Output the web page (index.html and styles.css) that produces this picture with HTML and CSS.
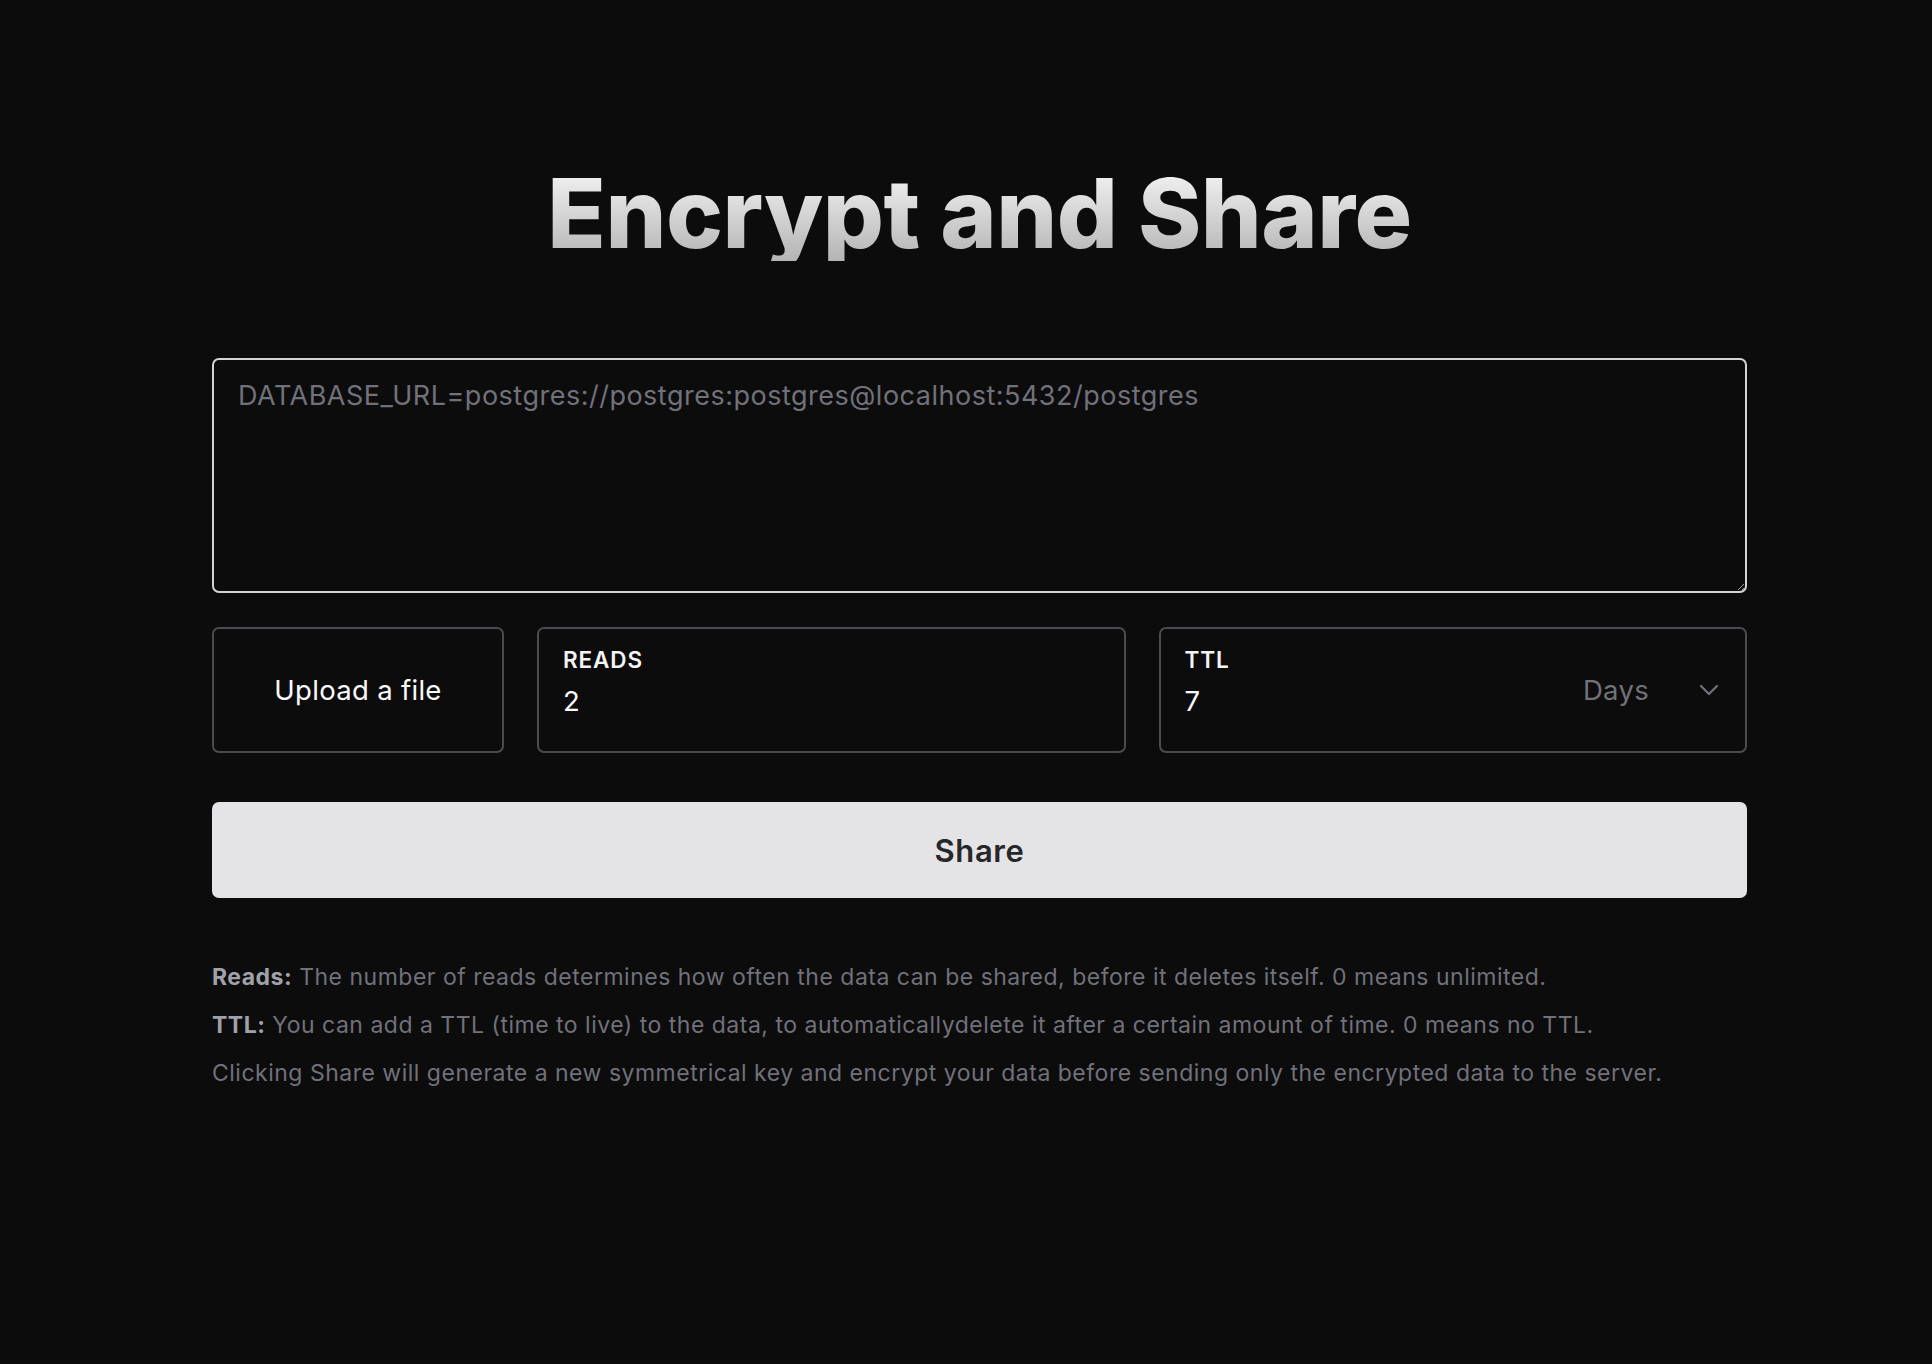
FILE: index.html
```html
<!DOCTYPE html>
<html lang="en">
<head>
<meta charset="utf-8">
<title>Encrypt and Share</title>
<link rel="stylesheet" href="styles.css">
</head>
<body>
<main class="page">
  <div class="container">
    <h1 class="title">Encrypt and Share</h1>
    <form class="form">
      <textarea class="secret" placeholder="DATABASE_URL=postgres://postgres:postgres@localhost:5432/postgres"></textarea>
      <div class="options">
        <div class="box upload">Upload a file</div>
        <div class="box field">
          <span class="label">READS</span>
          <span class="value">2</span>
        </div>
        <div class="box field ttl">
          <div class="ttl-left">
            <span class="label">TTL</span>
            <span class="value">7</span>
          </div>
          <div class="unit">
            <span>Days</span>
            <svg class="chevron" width="20" height="12" viewBox="0 0 20 12" fill="none"><path d="M2 2l8 8 8-8" stroke="#71717a" stroke-width="2.2" stroke-linecap="round" stroke-linejoin="round"/></svg>
          </div>
        </div>
      </div>
      <button type="button" class="share">Share</button>
    </form>
    <div class="notes">
      <p><b>Reads:</b> The number of reads determines how often the data can be shared, before it deletes itself. 0 means unlimited.</p>
      <p><b>TTL:</b> You can add a TTL (time to live) to the data, to automaticallydelete it after a certain amount of time. 0 means no TTL.</p>
      <p>Clicking Share will generate a new symmetrical key and encrypt your data before sending only the encrypted data to the server.</p>
    </div>
  </div>
</main>
</body>
</html>
```

FILE: styles.css
```css
* { box-sizing: border-box; }
html, body {
  margin: 0;
  background: #0c0c0d;
  color-scheme: dark;
  font-family: Inter, "Noto Sans", sans-serif;
}
.page {
  min-height: 1364px;
  padding-left: 27px;
  display: flex;
  justify-content: center;
}
.container {
  width: 1535px;
  padding-top: 165px;
}
.title {
  margin: 0 0 97px;
  text-align: center;
  font-size: 96px;
  line-height: 96px;
  font-weight: 800;
  letter-spacing: -0.005em;
  background: linear-gradient(to bottom, #f6f6f6 0%, #b4b4b4 100%);
  -webkit-background-clip: text;
  background-clip: text;
  color: transparent;
}
.form {
  display: flex;
  flex-direction: column;
}
.secret {
  display: block;
  width: 100%;
  height: 235px;
  margin: 0 0 34px;
  padding: 18px 24px;
  background: #0c0c0d;
  border: 2px solid #d4d4d8;
  border-radius: 7px;
  color: #e4e4e7;
  font-family: Inter, "Noto Sans", sans-serif;
  font-size: 27px;
  line-height: 36px;
  letter-spacing: 0.5px;
  outline: none;
}
.secret::placeholder { color: #71717a; }
.options {
  display: grid;
  grid-template-columns: 292px 1fr 1fr;
  gap: 33px;
  margin-bottom: 49px;
}
.box {
  height: 126px;
  border: 2px solid #4a4a50;
  border-radius: 7px;
  color: #fafafa;
}
.upload {
  display: flex;
  align-items: center;
  justify-content: center;
  font-size: 27.5px;
  letter-spacing: 0.3px;
}
.field {
  display: flex;
  flex-direction: column;
  padding: 19px 24px 0;
}
.label {
  font-size: 22.5px;
  line-height: 24px;
  font-weight: 600;
  letter-spacing: 0.9px;
  color: #f4f4f5;
}
.value {
  margin-top: 11px;
  font-size: 27.5px;
  line-height: 36px;
  color: #fafafa;
}
.ttl {
  flex-direction: row;
  justify-content: space-between;
  padding-right: 26px;
}
.ttl-left {
  display: flex;
  flex-direction: column;
}
.unit {
  display: flex;
  align-items: center;
  gap: 50px;
  height: 122px;
  margin-top: -19px;
  color: #71717a;
  font-size: 27.5px;
  letter-spacing: 0.3px;
}
.chevron { display: block; }
.share {
  height: 96px;
  width: 100%;
  border: 0;
  border-radius: 7px;
  background: #e4e4e7;
  color: #27272a;
  font-family: Inter, "Noto Sans", sans-serif;
  font-size: 31px;
  font-weight: 600;
  letter-spacing: 0.6px;
  cursor: pointer;
}
.notes {
  margin-top: 55px;
  color: #71717a;
  font-size: 23px;
  letter-spacing: 0.5px;
}
.notes p {
  margin: 0;
  line-height: 48px;
}
.notes b {
  color: #a1a1aa;
  font-weight: 700;
}
```
